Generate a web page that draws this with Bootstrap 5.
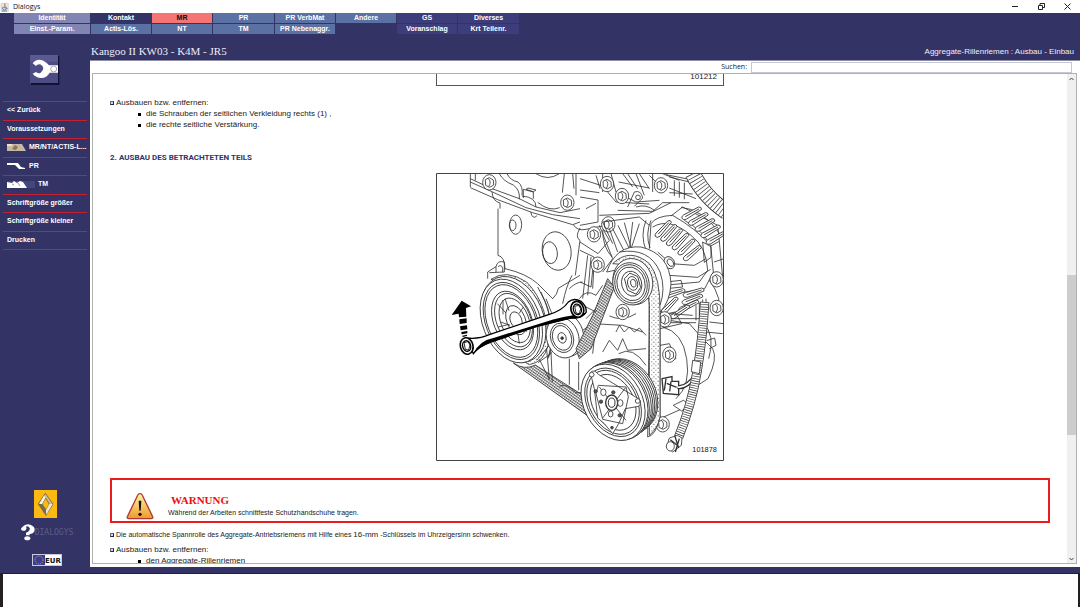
<!DOCTYPE html>
<html lang="de">
<head>
<meta charset="utf-8">
<meta name="viewport" content="width=device-width, initial-scale=1">
<title>Dialogys</title>
<link href="https://cdn.jsdelivr.net/npm/bootstrap@5.3.0/dist/css/bootstrap.min.css" rel="stylesheet">
<script src="https://cdn.jsdelivr.net/npm/bootstrap@5.3.0/dist/js/bootstrap.bundle.min.js" defer></script>
<style>
:root{--navy:#333366;--red:#c4202e}
body{font:8px/11px "Liberation Sans",Arial,sans-serif;color:#222;background:#fff}
button{font:inherit;color:inherit;border:0;padding:0;background:none}
svg{display:block;flex:none}
.titlebar{height:13px;font:7px/13px "Open Sans",sans-serif;color:#111}
.win-btn{width:26px;height:13px;display:flex;align-items:center;justify-content:center}
.app{background:var(--navy);min-height:0}
.tabs{display:grid;grid-template-columns:76px 60px 60px 61px 60px 60px 60px 61px;grid-auto-rows:10px;gap:1px;padding-left:14px;font:bold 7px/10px "Liberation Sans",sans-serif;color:#fff}
.tab-a{background:#8185b4}.tab-b{background:#5b70a3}.tab-c{background:#3d3d7c}.tab-on{background:#f57474;color:#111}
.side{width:90px;color:#fff;font:bold 7px/10px "Liberation Sans",sans-serif}
.tool{margin:21px auto 16px}
.side-menu{margin:0 3px;border-top:1px solid var(--red)}
.side-menu button{display:flex;align-items:center;gap:3px;width:100%;height:19px;padding:0 4px 2px;border-bottom:1px solid var(--red);white-space:nowrap}
.side-menu li:nth-child(even) button{height:18px}
.brand{gap:6px;padding-bottom:1px}
.logo-word{font:8px/12px "DejaVu Sans Mono",monospace;color:#5d5e87}
.currency{margin:7px 0 0 4px}
.head{height:26px;color:#eeeef8;padding:9px 6px 0 1px}
.car{font:11px/16px "Liberation Serif",serif}
.page-name{line-height:18px}
.sheet{background:#fff;min-height:0;padding:0 3px 3px 2px;border-top:1px solid #8e8ea8}
.search{height:12px;font:7px/12px "Open Sans",sans-serif;padding-right:5px}
.search input{width:321px;height:11px;border:1px solid #c5c8d4;padding:0 2px;margin-top:1px;font:inherit}
.viewer{border:1px solid #b0b0b3;min-height:0;overflow:hidden}
.doc{padding:0 17px;overflow:hidden;min-height:0}
.fig{width:288px;margin:0 auto}
.fig-end{height:12px;border:1px solid #555;border-top:0;text-align:right;line-height:5px;padding-right:6px;margin-bottom:11px}
.sq{width:4px;height:4px;border:1px solid #667;border-right-color:#225;border-bottom-color:#225;background:#c8d6ff;flex:none}
.item{gap:2px}
.sub{list-style:none;margin:0;padding:0 0 0 28px}
.sub li{display:flex;align-items:center;gap:5px}
.sub li::before{content:"";width:3px;height:3px;background:#000;margin-top:2px}
.sec{font:bold 8px/11px Roboto,"Liberation Sans",sans-serif;color:var(--navy);margin:22px 0 10px}
.warn{border:2px solid #ec1c1c;height:45px;padding:12px 14px 0;margin:17px 0 6px;gap:14px}
.warn h2{font:bold 11px/14px "Liberation Serif",serif;color:#ec1010;margin:1px 0 0 3px}
.fine{font-size:7px;line-height:11px}
.fine b{font-weight:400;font-size:8px}
.bar{width:9px;background:#f0f0f0;display:flex;flex-direction:column;align-items:center}
.thumb{width:100%;background:#cdcdcd;flex:160}
.above{flex:192}.below{flex:119}
.app-foot{height:6px}
.desk{height:34px;flex:none;background:#fff;border:solid #231f20;border-width:1px 2px 0 3px}
</style>
</head>
<body class="d-flex flex-column vh-100 overflow-hidden">
<header class="titlebar d-flex align-items-center">
  <svg width="9" height="10" viewBox="0 0 27 30"><path d="M3 4h22v24H3z" fill="#e4e8ec" stroke="#8da0ad"/><path d="M13 3c5 4-4 7 1 12M17 8c-3 3 2 4-1 8" fill="none" stroke="#c65a2c" stroke-width="2"/><path d="M7 17h12q0 7-6 7t-6-7m12 1q5 0 1 4M6 27h15" fill="none" stroke="#315e83" stroke-width="2"/></svg>
  <span class="ps-1 flex-grow-1">Dialogys</span>
  <button class="win-btn" aria-label="Minimieren"><svg width="7" height="7"><path d="M0 3.5h6" stroke="#222"/></svg></button>
  <button class="win-btn" aria-label="Wiederherstellen"><svg width="7" height="7"><path d="M.5 2.5h4v4h-4zM2 2V.5h4.500v4H5" fill="none" stroke="#222"/></svg></button>
  <button class="win-btn" aria-label="Schließen"><svg width="7" height="7"><path d="M.5.5l6 6m0-6l-6 6" stroke="#222"/></svg></button>
</header>
<div class="app d-flex flex-column flex-grow-1">
  <nav class="tabs">
    <button class="tab-a">Identität</button><button>Kontakt</button><button class="tab-on">MR</button><button class="tab-b">PR</button><button class="tab-b">PR VerbMat</button><button class="tab-b">Andere</button><button class="tab-c">GS</button><button class="tab-c">Diverses</button>
    <button class="tab-a">Einst.-Param.</button><button class="tab-b">Actis-Lös.</button><button class="tab-b">NT</button><button class="tab-b">TM</button><button class="tab-b">PR Nebenaggr.</button><span></span><button class="tab-c">Voranschlag</button><button class="tab-c">Krt Teilenr.</button>
  </nav>
  <div class="d-flex flex-grow-1" style="min-height:0">
    <aside class="side d-flex flex-column flex-shrink-0">
      <svg class="tool" width="30" height="30" viewBox="0 0 90 90"><path d="M3 3h85v87H3z" fill="#111133"/><path d="M0 0h84v84H0z" fill="#4d4d86"/><path d="M0 0h84v20H0z" fill="#5a5a92"/><path d="M8 25Q20 9 40 17Q51 23 57 31H84V53H59Q50 69 34 69Q17 68 8 56L18 51Q26 57 32 53Q40 47 40 40Q37 29 28 28Q20 29 18 33z" fill="#fff"/><circle cx="71" cy="42" r="9" fill="#fff" stroke="#aaa" stroke-width="3"/></svg>
      <ul class="side-menu list-unstyled">
        <li><button>&lt;&lt; Zurück</button></li>
        <li><button>Voraussetzungen</button></li>
        <li><button><svg width="19" height="7"><path d="M0 0h15l4 7H0z" fill="#c6b8a2"/><path d="M5 5l3-4 3 2-2 3z" fill="#8d7557"/><path d="M0 0h5v2H0z" fill="#efe4cf"/></svg>MR/NT/ACTIS-L...</button></li>
        <li><button><svg width="19" height="8"><path d="M0 1h11l3 4 4 1v1h-6L8 3H0z" fill="#fff"/></svg>PR</button></li>
        <li><button><svg width="28" height="7"><path d="M0 0h28v7H0z" fill="#46467f"/><path d="M0 1l5 1 2-2 3 2 3-2 3 1 4 6H0z" fill="#fff"/><path d="M5 3l2 1m4-2l2 3" stroke="#999"/></svg>TM</button></li>
        <li><button>Schriftgröße größer</button></li>
        <li><button>Schriftgröße kleiner</button></li>
        <li><button>Drucken</button></li>
      </ul>
      <div class="brand mt-auto d-flex flex-column align-items-center">
        <svg width="23" height="28" viewBox="0 0 69 84"><path d="M0 0h69v84H0z" fill="#fbb911"/><path d="M34 10L57 42 36 76 13 42zM35 24L24 42 36 60 46 42z" fill="#c8c0a6" fill-rule="evenodd" stroke="#5a4a25" stroke-width="2"/><path d="M34 10l-4 16-6 16 12 18 0 16-23-34z" fill="#77694e"/><path d="M31 15l3 9-10 18h-9z" fill="#f8f5e7"/><path d="M46 42h10L37 74l-1-14z" fill="#eee5c5"/></svg>
        <div class="d-flex align-items-center ps-1">
          <svg width="14" height="17" viewBox="0 0 42 51"><path d="M4 9Q14-2 28 2 46 9 39 24 35 30 26 30V34H15V26Q28 22 26 12 22 5 15 8 19 15 12 20 0 21 0 14z" fill="#fff"/><ellipse cx="19" cy="43" rx="9" ry="6" fill="#fff"/></svg>
          <span class="logo-word">DIALOGYS</span>
        </div>
        <svg class="currency" width="30" height="12" role="img" aria-label="EUR"><path d="M0 0h30v12H0z" fill="#c9c9de"/><path d="M1 1h12v10H1z" fill="#3c3c98"/><circle cx="7" cy="6" r="4" fill="none" stroke="#c6b844" stroke-dasharray="1 1.100"/><path d="M13 1h16v10H13z" fill="#fff"/><text x="13" y="9" font-family="DejaVu Sans" font-weight="bold" font-size="7" fill="#111">EUR</text></svg>
      </div>
    </aside>
    <main class="d-flex flex-column flex-grow-1" style="min-width:0">
      <div class="head d-flex justify-content-between"><span class="car">Kangoo II KW03 - K4M - JR5</span><span class="page-name">Aggregate-Rillenriemen : Ausbau - Einbau</span></div>
      <div class="sheet d-flex flex-column flex-grow-1">
        <div class="search d-flex justify-content-end gap-1"><label for="q">Suchen:</label><input id="q" type="text"></div>
        <div class="viewer d-flex flex-grow-1">
          <article class="doc flex-grow-1">
            <div class="fig fig-end">101212</div>
            <div class="item d-flex align-items-center"><span class="sq"></span>Ausbauen bzw. entfernen:</div>
            <ul class="sub"><li>die Schrauben der seitlichen Verkleidung rechts (1) ,</li><li>die rechte seitliche Verstärkung.</li></ul>
            <h1 class="sec">2. AUSBAU DES BETRACHTETEN TEILS</h1>
            <div class="fig">
<svg width="288" height="288" viewBox="0 3 864 864" fill="none" stroke="#333" stroke-width="2.500">
<defs>
<pattern id="dots" width="13" height="13" patternUnits="userSpaceOnUse"><path d="M0 0h13v13H0z" fill="#fff" stroke="none"/><path d="M2 2h3v3H2zM9 8h2v3H9z" fill="#444" stroke="none"/></pattern>
<pattern id="mesh" width="7" height="7" patternUnits="userSpaceOnUse" patternTransform="rotate(35)"><path d="M0 0h7v7H0z" fill="#fff" stroke="none"/><path d="M0 2h7M3 0v5" stroke="#333" stroke-width="2"/></pattern>
<g id="bolt"><ellipse rx="20" ry="23" fill="#fff"/><path d="M-12-8L0-14 12-7 13 8 1 15-11 9z" fill="#fff"/><path d="M-4-12Q8-2-2 13"/></g>
<g id="slot"><path d="M-8-25Q-7-34 1-32L20 18Q22 30 13 31 8 30 6 24z" fill="#fff"/><path d="M-2-25L12 20"/></g>
</defs>
<path d="M0 3h864v864H0z" fill="#fff" stroke="none"/>
<!-- cylinder head and timing cover -->
<path d="M103 5V45M118 5v20M103 20L160 47 250 80 300 105 372 122 432 110M103 30L170 60 270 107 350 128 432 140M103 47L185 83 290 122 410 158 432 150M168 60Q170 88 192 93V110M186 110V250Q207 255 207 292M190 5Q202 28 232 39 253 54 250 82M213 5Q222 25 246 30 262 43 258 70M262 78V52L292 60V80M270 52l22 7 8-5-24-6zM284 120Q290 145 303 131M300 5Q335 28 370 5M385 5L379 62M410 5L414 50M420 5V70M258 72Q300 75 300 105M305 91Q340 120 371 107M432 168Q416 196 432 205M412 158Q424 178 450 172L520 158"/>
<path d="M207 290Q270 304 305 335L350 380Q364 368 367 349L432 310M155 320V300L180 284Q184 264 205 270V300L160 302M180 284V300M186 284q10-8 14 5v12M432 205L418 310M408 310Q390 344 380 395M455 250L440 380M465 255L455 370M475 260L470 350M400 350Q420 330 440 330"/>
<use href="#bolt" x="160" y="31"/><use href="#bolt" x="394" y="92"/>
<ellipse cx="239" cy="158" rx="18" ry="29"/><ellipse cx="230" cy="160" rx="10" ry="16"/>
<ellipse cx="362" cy="237" rx="43" ry="58" transform="rotate(-10 362 237)"/><ellipse cx="342" cy="242" rx="22" ry="33" transform="rotate(-8 342 242)"/>
<path d="M432 20L500 42 540 90 640 96M432 54L490 62M432 75L486 84V150L432 160M450 110L480 94M500 5V60M525 5L540 60 600 90 670 85M548 30L640 48M600 5L625 70M610 5L640 50M650 5L650 60M490 130L640 124 705 92M432 210L486 245 520 205 500 170M432 235L474 255 465 345 432 330M490 160L530 260 500 300M690 8l60 12M640 10l20 20M700 62l70 4M560 5l30 40M575 5l30 45M680 5l50 20M480 10l12 40"/>
<use href="#bolt" x="513" y="36"/><use href="#bolt" x="558" y="72"/><use href="#bolt" x="517" y="157"/><use href="#bolt" x="474" y="187"/><use href="#bolt" x="485" y="278"/><use href="#bolt" x="675" y="40"/>
<path d="M575 105L595 60Q615 53 620 78L595 103M600 105Q630 95 655 115M545 115L650 118 680 92 760 92M700 15L760 30M700 48L780 80M715 25V72M730 29V77M745 32V82"/>
<circle cx="606" cy="76" r="7"/>
<!-- bracket ribs -->
<path d="M530 215L500 150 610 135 640 160M530 170l35 68M546 160l35 72M565 152l20 75M590 150l-10 85M610 155l-28 85M630 145Q612 190 630 235M645 145Q627 185 642 228M520 170l25 70M500 175Q500 225 528 255"/>
<!-- alternator housing -->
<path d="M640 230L645 155Q660 132 710 130Q780 170 824 220L832 300 806 350 720 365M705 132L740 105 845 160 850 208 824 222M745 145Q800 175 820 215M650 165Q700 135 765 190 812 225 815 295L790 330 705 338M665 240L705 275 775 280 810 260M800 210l25 14v32l-20 15zM700 310L785 316 824 292M690 330L735 325 740 345 690 350M850 208L864 360M834 270L864 260M735 106Q800 110 855 190"/>
<g><use href="#slot" transform="translate(678 166) rotate(60)"/><use href="#slot" transform="translate(695 178) rotate(60)"/><use href="#slot" transform="translate(712 191) rotate(60)"/><use href="#slot" transform="translate(730 204) rotate(62)"/><use href="#slot" transform="translate(748 220) rotate(64)"/><use href="#slot" transform="translate(766 238) rotate(68)"/></g>
<ellipse cx="700" cy="272" rx="15" ry="19" fill="#fff" transform="rotate(-30 700 272)"/><ellipse cx="703" cy="272" rx="8" ry="12" transform="rotate(-30 703 272)"/>
<g><use href="#slot" transform="translate(765 118) rotate(78)"/><use href="#slot" transform="translate(785 135) rotate(78)"/><use href="#slot" transform="translate(805 153) rotate(78)"/><use href="#slot" transform="translate(822 172) rotate(78)"/><use href="#slot" transform="translate(838 192) rotate(78)"/></g>
<g><use href="#slot" transform="translate(715 358) rotate(90)"/><use href="#slot" transform="translate(772 356) rotate(90)"/><use href="#slot" transform="translate(768 376) rotate(86)"/><use href="#slot" transform="translate(757 396) rotate(82)"/><use href="#slot" transform="translate(730 414) rotate(74)"/><use href="#slot" transform="translate(698 395) rotate(62)"/></g>
<path d="M820 325Q840 350 848 380V430M780 400v45M790 392v50M800 382v58M810 380v60"/><use href="#bolt" x="842" y="408"/><use href="#bolt" x="842" y="322"/>
<!-- top right corrugated hose -->
<path d="M770 5Q805 75 872 120" stroke-width="48"/><path d="M770 5Q805 75 872 120" stroke="#fff" stroke-width="43"/><path d="M770 5Q805 75 872 120" stroke-width="42" stroke-dasharray="2 8"/>
<!-- housing behind belts -->
<path d="M672 440L760 455 800 500 830 530Q846 560 816 620L785 640 750 705 672 740M680 465Q740 480 752 560 765 640 720 680M800 450Q840 490 818 560M812 506L836 498 840 520 820 530M672 520L700 515 720 560 690 565M640 450V360M690 440H790M690 452H780M700 425L770 430M820 450l44 5M810 480l50 5M672 430l45-10 20 35-65 15"/>
<path d="M432 480L470 455 560 460 620 480M540 480L550 460 565 480 580 465 595 480 610 468 630 490M500 540L520 505 545 535 560 500 575 535 630 530M440 550L446 490M470 545L475 500M548 545Q590 520 630 580M520 432Q560 450 600 425"/>
<use href="#bolt" x="700" y="548"/><use href="#bolt" x="680" y="757"/><use href="#bolt" x="560" y="420"/><use href="#bolt" x="686" y="442"/>
<path d="M678 620l30-6v14h20v40l-46-4zM690 620l-5 35M705 628l-4 30M692 634l30 12" stroke-width="4"/><path d="M725 645Q750 650 783 607" stroke-width="13"/><path d="M725 645Q750 650 783 607" stroke="#fff" stroke-width="5"/>
<path d="M712 700l30-15 20 12-25 20z" fill="#fff"/>
<!-- crank pulley -->
<path d="M165 322Q210 290 272 330 340 400 336 520 325 570 280 578L250 560 260 350z" fill="url(#dots)"/>
<g transform="rotate(-22 226 447)" fill="#fff"><ellipse cx="234" cy="445" rx="90" ry="134"/><ellipse cx="226" cy="447" rx="86" ry="131"/><ellipse cx="226" cy="447" rx="77" ry="121"/><ellipse cx="226" cy="447" rx="72" ry="114"/><ellipse cx="230" cy="447" rx="57" ry="92"/><ellipse cx="233" cy="447" rx="51" ry="84"/><ellipse cx="236" cy="449" rx="42" ry="70"/><ellipse cx="240" cy="450" rx="28" ry="46"/><ellipse cx="240" cy="450" rx="17" ry="26"/></g>
<path d="M184 395l26 28M207 380l12 36M194 450l28 10M207 500l22-30M250 515l-4-28M272 480l-18-18M262 405l-13 20M201 384v43M186 465l34-8"/>
<path d="M305 345Q360 430 344 545M315 360Q366 460 338 556M302 565L340 520M306 572l40-28M330 380Q372 460 336 560"/>
<!-- lower belt -->
<path d="M232 573Q265 596 298 579L520 720 510 775 484 752z" fill="url(#mesh)"/>
<path d="M310 562l30 60-8-90M400 560v78M370 642Q396 634 420 662H440M428 570v85M345 540l4 90"/>
<!-- tensioner and its belt -->
<g transform="rotate(-18 380 497)" fill="#fff"><ellipse cx="392" cy="492" rx="52" ry="66"/><ellipse cx="380" cy="497" rx="48" ry="62"/><ellipse cx="378" cy="497" rx="34" ry="45"/><ellipse cx="378" cy="497" rx="28" ry="38"/><ellipse cx="378" cy="497" rx="12" ry="16"/><circle cx="378" cy="498" r="4" fill="#333"/></g>
<path d="M515 320L535 345 465 530 430 560 420 530 470 430z" fill="url(#mesh)"/>
<path d="M430 380Q450 350 480 370L500 340M440 400l40 20M450 440l30-30"/>
<!-- alternator belt and pulley -->
<path d="M512 300Q540 218 615 225 700 245 705 335 702 390 672 420V735Q660 790 635 795L640 430Q650 260 512 300z" fill="#fff"/>
<path d="M530 275Q582 225 640 275 674 315 672 420V735Q665 770 640 790V400Q636 275 530 275z" fill="url(#dots)"/>
<path d="M550 240Q640 225 672 300 690 350 672 400"/>
<g transform="rotate(-15 587 335)" fill="#fff"><ellipse cx="592" cy="330" rx="59" ry="70"/><ellipse cx="585" cy="335" rx="54" ry="64"/><ellipse cx="585" cy="335" rx="48" ry="58"/><ellipse cx="585" cy="335" rx="42" ry="51"/><ellipse cx="587" cy="335" rx="30" ry="38"/><path d="M570 315l20-12 20 16v34l-18 16-22-18z"/><ellipse cx="590" cy="335" rx="15" ry="21"/><ellipse cx="592" cy="335" rx="8" ry="12"/></g>
<!-- compressor pulley -->
<g transform="rotate(-28 532 686)" fill="#fff"><ellipse cx="572" cy="690" rx="90" ry="116"/><ellipse cx="566" cy="690" rx="91" ry="117"/><ellipse cx="560" cy="690" rx="91" ry="118"/><ellipse cx="554" cy="690" rx="91" ry="119"/><ellipse cx="548" cy="690" rx="91" ry="120"/><ellipse cx="541" cy="690" rx="91" ry="121"/><ellipse cx="535" cy="690" rx="92" ry="122"/><ellipse cx="529" cy="690" rx="88" ry="121"/><ellipse cx="529" cy="690" rx="77" ry="109"/><ellipse cx="529" cy="690" rx="71" ry="102"/><ellipse cx="529" cy="690" rx="62" ry="89"/></g>
<path d="M463 602Q475 590 487 607L607 680Q620 690 608 703L568 710 548 755 530 785 505 755 485 738 475 650z" fill="#fff"/>
<path d="M487 640L570 645 577 675 560 755 500 742 480 665zM490 645l80 100M568 648l-68 90"/>
<ellipse cx="527" cy="692" rx="18" ry="23" fill="#fff" stroke-width="4"/><ellipse cx="527" cy="692" rx="10" ry="14" fill="#fff" stroke-width="3"/>
<g fill="#fff"><ellipse cx="502" cy="661" rx="8" ry="10"/><ellipse cx="553" cy="693" rx="8" ry="10"/><ellipse cx="524" cy="726" rx="7" ry="9"/><circle cx="605" cy="687" r="7"/><circle cx="467" cy="608" r="7"/></g><g fill="#555"><circle cx="532" cy="661" r="5"/><circle cx="495" cy="689" r="5"/><circle cx="551" cy="730" r="5"/><circle cx="528" cy="767" r="4"/><circle cx="479" cy="658" r="5"/></g>
<!-- right corrugated cable -->
<path d="M806 390Q800 500 783 600T728 795" stroke-width="28"/><path d="M806 390Q800 500 783 600T728 795" stroke="#fff" stroke-width="23"/><path d="M806 390Q800 500 783 600T728 795" stroke-width="23" stroke-dasharray="2 5"/>
<path d="M770 565l24 5-4 35-24-6z" fill="#fff"/><path d="M724 790l14 8-2 22-26 20-18-16 8-26z" fill="#fff"/><path d="M703 803l20 16M716 790l12 38M730 800l-12 40" stroke-width="4"/><ellipse cx="703" cy="823" rx="12" ry="14" fill="#fff"/>
<!-- ring spanner -->
<path d="M92 498Q130 502 160 488L340 427Q380 415 397 390 414 376 435 388 454 405 450 422 436 440 405 437L300 464 170 507Q130 520 112 545z" fill="#fff" stroke="#000" stroke-width="4"/>
<path d="M112 545Q130 505 175 497L330 449Q375 435 400 432L450 422 Q440 442 405 440L300 466 165 512Q130 525 112 545z" fill="#000" stroke="none"/>
<ellipse cx="92" cy="522" rx="19" ry="25" fill="#fff" stroke="#000" stroke-width="5" transform="rotate(-15 92 522)"/><ellipse cx="92" cy="522" rx="12" ry="16" stroke="#000" stroke-width="4" transform="rotate(-15 92 522)"/><path d="M84 512l12-3 6 10-4 15-10-2z" stroke="#000"/>
<ellipse cx="424" cy="412" rx="19" ry="24" fill="#fff" stroke="#000" stroke-width="5" transform="rotate(-15 424 412)"/><ellipse cx="424" cy="412" rx="12" ry="16" stroke="#000" stroke-width="4" transform="rotate(-15 424 412)"/><path d="M416 403l12-3 6 10-4 15-10-2z" stroke="#000"/>
<path d="M77 386L105 403 90 408 91 434 69 436 68 425 47 429zM70 442l22-3v14l-21 3zM72 463l21-3 1 12-20 3zM76 480l18-3v7l-17 3zM79 491l14-3v4l-13 3z" fill="#000" stroke="none"/>
<text x="769" y="841" font-family="Liberation Sans" font-size="22" fill="#111" stroke="none">101878</text>
<path d="M1.500 4.500h861v861H1.500z" stroke-width="3" stroke="#444"/>
</svg>
            </div>
            <section class="warn d-flex">
              <svg width="28" height="28" viewBox="0 0 84 84"><defs><linearGradient id="wg" x2="0" y2="1"><stop stop-color="#fff5a5"/><stop offset="1" stop-color="#ef982a"/></linearGradient></defs><path d="M42 5Q47 5 49 10L80 74Q82 80 75 80H9Q2 80 4 74L35 10Q37 5 42 5z" fill="url(#wg)" stroke="#aa3b32" stroke-width="4"/><path d="M38 26h8l-2 30h-4z" fill="#111"/><circle cx="42" cy="67" r="5" fill="#111"/></svg>
              <div class="fine"><h2>WARNUNG</h2>Während der Arbeiten schnittfeste Schutzhandschuhe tragen.</div>
            </section>
            <div class="item d-flex align-items-center fine"><span class="sq"></span><span>Die automatische Spannrolle des Aggregate-Antriebsriemens mit Hilfe eines <b>16-mm</b> -Schlüssels im Uhrzeigersinn schwenken.</span></div>
            <div class="item d-flex align-items-center pt-1"><span class="sq"></span>Ausbauen bzw. entfernen:</div>
            <ul class="sub"><li>den Aggregate-Rillenriemen</li></ul>
          </article>
          <div class="bar" aria-hidden="true"><svg width="7" height="9"><path d="M1.500 6l2-2 2 2" fill="none" stroke="#444"/></svg><div class="above"></div><div class="thumb"></div><div class="below"></div><svg width="7" height="9"><path d="M1.500 4l2 2 2-2" fill="none" stroke="#444"/></svg></div>
        </div>
      </div>
    </main>
  </div>
  <div class="app-foot"></div>
</div>
<footer class="desk"></footer>
</body>
</html>
